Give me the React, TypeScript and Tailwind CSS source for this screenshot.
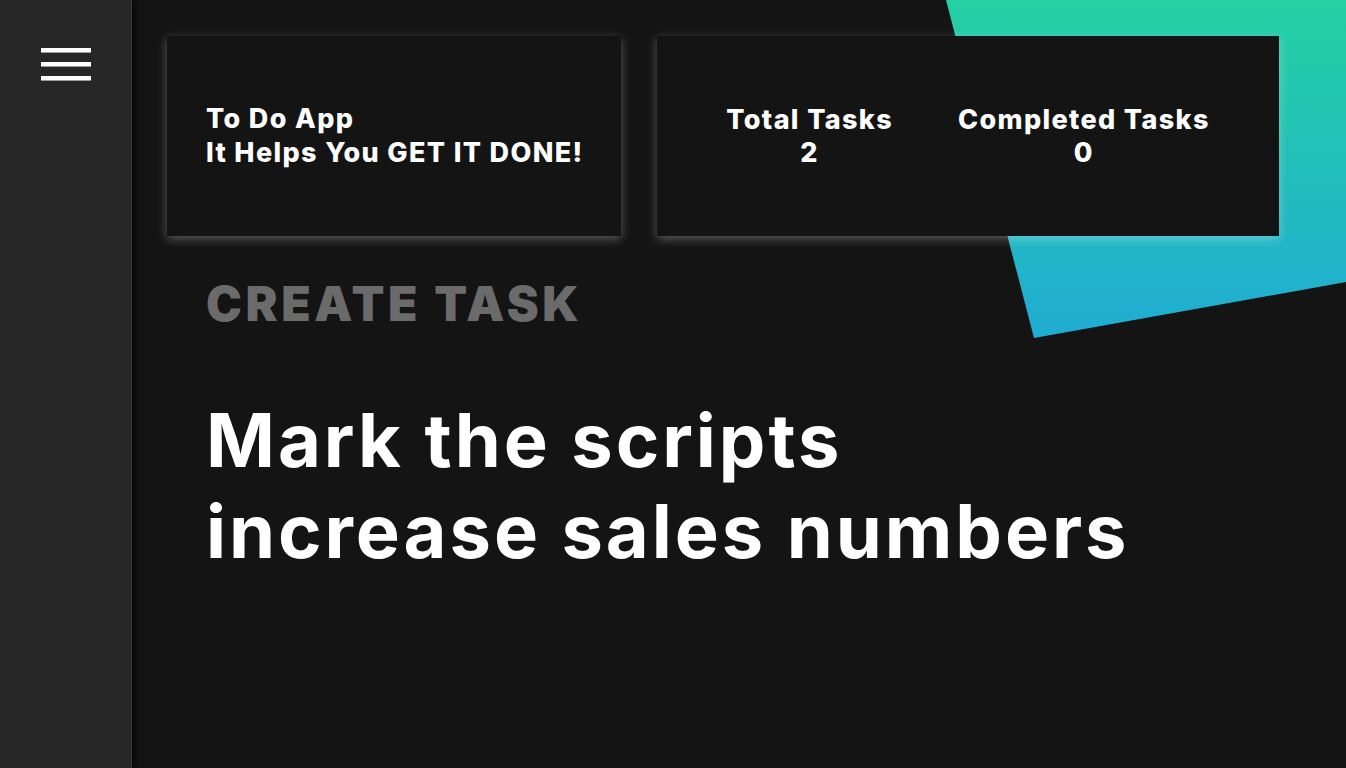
import React from "react";

export default function App() {
  return (
    <div className="flex h-[768px] w-[1346px] overflow-hidden bg-[#141414] font-['Inter',sans-serif]">
      <aside className="relative z-10 flex w-[132px] shrink-0 flex-col items-start border-r border-[#3a3a3a] bg-[#272727] pl-[41px] pt-[48px] shadow-[3px_0_8px_rgba(0,0,0,0.7)]">
        <div className="flex flex-col gap-[9px]">
          <span className="block h-[5px] w-[50px] border-b border-[#9a9a9a] bg-white" />
          <span className="block h-[5px] w-[50px] border-b border-[#9a9a9a] bg-white" />
          <span className="block h-[5px] w-[50px] border-b border-[#9a9a9a] bg-white" />
        </div>
      </aside>
      <main className="relative flex-1">
        <svg className="absolute right-0 top-0" width="400" height="340" viewBox="0 0 400 340">
          <defs>
            <linearGradient id="g" x1="0" y1="0" x2="0" y2="1">
              <stop offset="0" stopColor="#25d0a2" />
              <stop offset="1" stopColor="#20acd3" />
            </linearGradient>
          </defs>
          <polygon points="0,0 400,0 400,282 88,338" fill="url(#g)" />
        </svg>
        <div className="relative flex flex-col pl-[35px] pt-[36px]">
          <div className="flex gap-[36px]">
            <div className="flex h-[200px] w-[454px] flex-col justify-center bg-[#141414] pl-[39px] text-[27px] font-extrabold leading-[34px] tracking-[0.05em] text-white shadow-[0_3px_10px_rgba(255,255,255,0.3)]">
              <div>To Do App</div>
              <div>It Helps You GET IT DONE!</div>
            </div>
            <div className="flex h-[200px] w-[622px] items-center justify-center gap-[65px] bg-[#141414] text-[27px] font-extrabold leading-[33px] tracking-[0.05em] text-white shadow-[0_3px_10px_rgba(255,255,255,0.3)]">
              <div className="flex flex-col items-center">
                <div>Total Tasks</div>
                <div>2</div>
              </div>
              <div className="flex flex-col items-center">
                <div>Completed Tasks</div>
                <div>0</div>
              </div>
            </div>
          </div>
          <div className="mt-[40px] pl-[39px] text-[48px] font-black leading-[56px] tracking-[0.075em] text-[#6b6b6b]">
            CREATE TASK
          </div>
          <div className="mt-[63px] pl-[39px] text-[74px] font-bold leading-[91px] tracking-[0.04em] text-white">
            <div>Mark the scripts</div>
            <div>increase sales numbers</div>
          </div>
        </div>
      </main>
    </div>
  );
}
